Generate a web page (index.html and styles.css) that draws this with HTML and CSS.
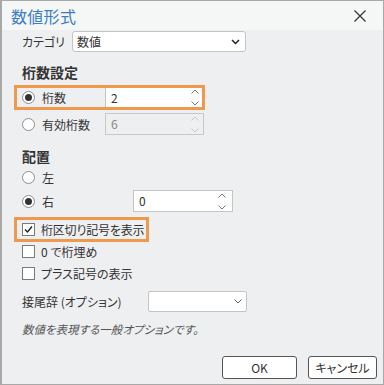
FILE: index.html
```html
<!DOCTYPE html>
<html lang="ja">
<head>
<meta charset="utf-8">
<link rel="stylesheet" href="styles.css">
</head>
<body>
<div class="dialog">
  <div class="titlebar">
    <span class="title">数値形式</span>
    <svg class="close" width="12" height="12" viewBox="0 0 12 12"><path d="M0.5 0.5 L11.5 11.5 M11.5 0.5 L0.5 11.5" stroke="#333" stroke-width="1.2" fill="none"/></svg>
  </div>
  <div class="content">
    <div class="row cat-row">
      <span class="cat-label">カテゴリ</span>
      <div class="select cat-select">
        <span>数値</span>
        <svg width="9" height="6" viewBox="0 0 9 6"><path d="M1 1 L4.5 4.5 L8 1" stroke="#222" stroke-width="1.5" fill="none"/></svg>
      </div>
    </div>

    <div class="heading h1">桁数設定</div>

    <div class="row hl hl-digits">
      <span class="radio on"></span>
      <span class="rlabel">桁数</span>
      <div class="spin spin-digits">
        <span>2</span>
        <svg width="8" height="17" viewBox="0 0 8 17"><path d="M0.5 4.5 L4 1 L7.5 4.5 M0.5 12.5 L4 16 L7.5 12.5" stroke="#777" stroke-width="1" fill="none"/></svg>
      </div>
    </div>

    <div class="row r-sig">
      <span class="radio"></span>
      <span class="rlabel">有効桁数</span>
      <div class="spin spin-sig disabled">
        <span>6</span>
        <svg width="8" height="17" viewBox="0 0 8 17"><path d="M0.5 4.5 L4 1 L7.5 4.5 M0.5 12.5 L4 16 L7.5 12.5" stroke="#c8c8c8" stroke-width="1" fill="none"/></svg>
      </div>
    </div>

    <div class="heading h2">配置</div>

    <div class="row r-left">
      <span class="radio"></span>
      <span class="rlabel">左</span>
    </div>
    <div class="row r-right">
      <span class="radio on"></span>
      <span class="rlabel">右</span>
      <div class="spin spin-pad">
        <span>0</span>
        <svg width="8" height="17" viewBox="0 0 8 17"><path d="M0.5 4.5 L4 1 L7.5 4.5 M0.5 12.5 L4 16 L7.5 12.5" stroke="#777" stroke-width="1" fill="none"/></svg>
      </div>
    </div>

    <div class="row hl hl-sep">
      <span class="check on"><svg width="11" height="11" viewBox="0 0 11 11"><path d="M2 5.5 L4.5 8 L9 2.5" stroke="#222" stroke-width="1.4" fill="none"/></svg></span>
      <span class="clabel">桁区切り記号を表示</span>
    </div>
    <div class="row r-zero">
      <span class="check"></span>
      <span class="clabel">0 で桁埋め</span>
    </div>
    <div class="row r-plus">
      <span class="check"></span>
      <span class="clabel">プラス記号の表示</span>
    </div>

    <div class="row r-suffix">
      <span class="suf-label">接尾辞 (オプション)</span>
      <div class="select suf-select">
        <span></span>
        <svg width="8" height="5" viewBox="0 0 8 5"><path d="M0.5 0.5 L4 4 L7.5 0.5" stroke="#666" stroke-width="1" fill="none"/></svg>
      </div>
    </div>

    <div class="note">数値を表現する一般オプションです。</div>

    <div class="buttons">
      <button class="btn ok">OK</button>
      <button class="btn cancel">キャンセル</button>
    </div>
  </div>
</div>
</body>
</html>
```

FILE: styles.css
```css
* { box-sizing: border-box; }
html, body { margin: 0; padding: 0; }
body {
  width: 384px;
  height: 385px;
  font-family: "Noto Sans CJK JP", "Noto Sans", sans-serif;
  font-feature-settings: "palt";
  font-size: 12px;
  color: #333;
  background: #eeeff1;
}
.dialog {
  width: 384px;
  height: 385px;
  border: 1px solid #a8a8a8;
  border-left-width: 2px;
  background: #eeeff1;
  display: flex;
  flex-direction: column;
}
.titlebar {
  height: 29px;
  background: #f5f6f6;
  display: flex;
  align-items: center;
  justify-content: space-between;
  padding: 0 17px 0 9px;
  flex: none;
}
.title {
  font-size: 16px;
  color: #3a80c4;
  letter-spacing: 0.3px;
}
.close { display: block; margin-top: 1px; }

.content {
  padding-left: 20px;
  padding-right: 6px;
  display: flex;
  flex-direction: column;
}
.row {
  display: flex;
  align-items: center;
  flex: none;
  white-space: nowrap;
}
.cat-row { height: 21px; margin-top: 1px; }
.cat-label { width: 50px; }
.select {
  background: #fff;
  border: 1px solid #c4c4c4;
  border-radius: 3px;
  display: flex;
  align-items: center;
  justify-content: space-between;
  height: 100%;
}
.cat-select { width: 174px; padding: 0 5px 0 4px; }
.heading {
  height: 20px;
  line-height: 20px;
  font-size: 14px;
  font-weight: 700;
  color: #333;
  flex: none;
}
.h1 { margin-top: 10px; }
.h2 { margin-top: 11px; }

.hl {
  border: 3px solid #f0994c;
  margin-left: -8px;
  padding-left: 5px;
  height: 25px;
}
.hl-digits { width: 191px; margin-top: 3px; }
.radio {
  width: 13px;
  height: 13px;
  border-radius: 50%;
  border: 1px solid #8d8d8d;
  background: #fff;
  flex: none;
  display: flex;
  align-items: center;
  justify-content: center;
}
.radio.on::after {
  content: "";
  width: 7px;
  height: 7px;
  border-radius: 50%;
  background: #333;
}
.rlabel { margin-left: 7px; }
.spin {
  display: flex;
  align-items: center;
  justify-content: space-between;
  background: #fff;
  padding: 0 3px 0 5px;
}
.spin span { line-height: 1; }
.spin-digits {
  margin-left: auto;
  width: 97px;
  height: 19px;
  border-left: 1px solid #c4c4c4;
}
.r-sig { height: 22px; margin-top: 3px; }
.spin-sig {
  margin-left: 15px;
  width: 99px;
  height: 22px;
  border: 1px solid #c8c8c8;
  background: transparent;
  padding-right: 4px;
}
.spin.disabled span { color: #8a8a8a; }
.r-left { height: 22px; margin-top: 0; }
.r-right { height: 22px; margin-top: 2px; }
.spin-pad {
  margin-left: 79px;
  width: 100px;
  height: 22px;
  border: 1px solid #c4c4c4;
  padding-right: 6px;
}
.hl-sep { width: 135px; margin-top: 5px; padding-left: 5px; overflow: visible; }
.check {
  width: 13px;
  height: 13px;
  border: 1px solid #7a7a7a;
  background: #fff;
  flex: none;
  display: flex;
  align-items: center;
  justify-content: center;
}
.clabel { margin-left: 6px; }
.hl-sep .clabel { letter-spacing: -0.2px; }
.r-zero { height: 18px; }
.r-plus { height: 18px; margin-top: 4px; }
.r-suffix { height: 21px; margin-top: 9px; }
.suf-label { width: 126px; }
.suf-select { width: 99px; padding: 0 4px; border-radius: 2px; }
.note {
  margin-top: 9px;
  height: 16px;
  line-height: 16px;
  font-style: italic;
  color: #555;
  font-size: 11.5px;
}
.buttons {
  margin-top: 19px;
  display: flex;
  justify-content: flex-end;
  gap: 11px;
}
.btn {
  font-family: inherit;
  font-feature-settings: "palt";
  font-size: 12px;
  color: #333;
  height: 23px;
  background: #fff;
  border: 1px solid #555;
  border-radius: 3px;
  padding: 0;
}
.ok { width: 75px; }
.cancel { width: 69px; }
```
